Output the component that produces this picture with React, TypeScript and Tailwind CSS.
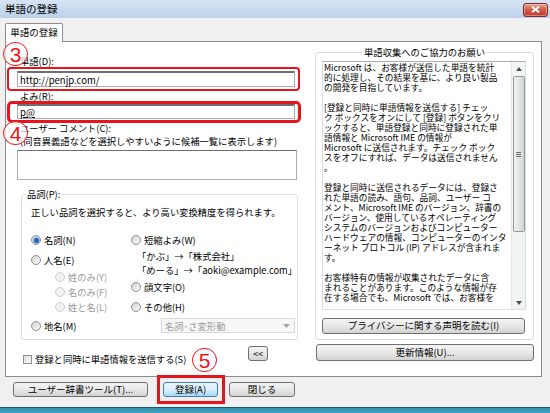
import React from 'react';

function Radio({ checked, disabled }: { checked?: boolean; disabled?: boolean }) {
  return (
    <span
      className={`flex h-[10px] w-[10px] shrink-0 items-center justify-center rounded-full border ${
        disabled
          ? 'border-[#cfcfcf] bg-[#f2f2f2]'
          : 'border-[#8e8f8f] bg-linear-to-br from-[#d2d2d2] to-[#fbfbfb]'
      }`}
    >
      {checked && <span className="h-[5px] w-[5px] rounded-full bg-[#2a62b8] ring-1 ring-[#8fb8ea]" />}
    </span>
  );
}

function Btn({
  children,
  className = '',
  primary,
}: {
  children: React.ReactNode;
  className?: string;
  primary?: boolean;
}) {
  return (
    <div
      className={`flex items-center justify-center rounded-[3px] border text-[9.5px] leading-none text-black ${
        primary
          ? 'border-[#3c7fb1] bg-linear-to-b from-[#eaf6fd] via-[#d9f0fc] to-[#a7d9f5]'
          : 'border-[#707070] bg-linear-to-b from-[#f4f4f4] via-[#e8e8e8] to-[#d2d2d2]'
      } ${className}`}
    >
      {children}
    </div>
  );
}

function Mark({ n, className }: { n: string; className: string }) {
  return (
    <div
      className={`absolute flex h-[24px] w-[25px] items-center justify-center rounded-full border-[1.5px] border-[#e8141c] bg-white/70 font-['Liberation_Sans',sans-serif] text-[21px] leading-none text-[#e8141c] ${className}`}
    >
      {n}
    </div>
  );
}

const INFO = [
  'Microsoft は、お客様が送信した単語を統計',
  '的に処理し、その結果を基に、より良い製品',
  'の開発を目指しています。',
  '',
  '[登録と同時に単語情報を送信する] チェッ',
  'ク ボックスをオンにして [登録] ボタンをクリ',
  'ックすると、単語登録と同時に登録された単',
  '語情報と Microsoft IME の情報が',
  'Microsoft に送信されます。チェック ボック',
  'スをオフにすれば、データは送信されません',
  '。',
  '',
  '登録と同時に送信されるデータには、登録さ',
  'れた単語の読み、語句、品詞、ユーザー コ',
  'メント、Microsoft IME のバージョン、辞書の',
  'バージョン、使用しているオペレーティング',
  'システムのバージョンおよびコンピューター',
  'ハードウェアの情報、コンピューターのインタ',
  'ーネット プロトコル (IP) アドレスが含まれま',
  'す。',
  '',
  'お客様特有の情報が収集されたデータに含',
  'まれることがあります。このような情報が存',
  '在する場合でも、Microsoft では、お客様を',
];

export default function App() {
  return (
    <div className="relative flex h-[413px] w-[550px] flex-col overflow-hidden bg-[#f0f0f0] font-['Noto_Sans_CJK_JP','Noto_Sans',sans-serif] text-black">
      {/* title bar */}
      <div className="flex h-[18px] shrink-0 items-center justify-between bg-linear-to-b from-[#d6e4f4] to-[#bcd1ea] pl-[5px] pr-[2px]">
        <span className="text-[10.5px] leading-none">単語の登録</span>
        <div className="mt-[1px] flex h-[14px] w-[25px] items-center justify-center rounded-[3px] border border-[#7a2a22] bg-linear-to-b from-[#e8a297] via-[#d0584a] to-[#c0392b] shadow-[inset_0_0_0_1px_rgba(255,255,255,0.35)]">
          <svg width="9" height="7" viewBox="0 0 9 7">
            <path d="M1 0.8 L8 6.2 M8 0.8 L1 6.2" stroke="#fff" strokeWidth="2" />
          </svg>
        </div>
      </div>

      {/* tab */}
      <div className="relative z-10 mt-[5px] -mb-px ml-[5px] flex h-[19px] w-[58px] items-center justify-center rounded-t-[2px] border border-b-0 border-[#898c95] bg-white text-[9.5px] leading-none">
        単語の登録
      </div>

      {/* panel */}
      <div className="ml-[5px] flex h-[336px] w-[537px] border border-[#898c95] bg-white">
        {/* left column */}
        <div className="flex w-[297px] flex-col pl-[1px] text-[9.3px] leading-[10px]">
          <div className="mt-[14px] pl-[13px] leading-[11px]">単語(D):</div>
          <div className="h-[24px] w-[293px] rounded-[4px] border-2 border-[#e8141c] pl-[8px] pt-[2px]">
            <div className="flex h-[16px] w-[278px] items-center border border-[#abadb3] border-t-[#6f6f6f] border-t-2 pl-[2px] text-[9.5px]">
              http://penjp.com/
            </div>
          </div>
          <div className="h-[10px] pl-[13px]">よみ(R):</div>
          <div className="h-[22px] w-[294px] rounded-[5px] border-[3px] border-[#e8141c] pl-[7px]">
            <div className="flex h-[15px] w-[278px] items-center border border-[#abadb3] border-t-[#6f6f6f] border-t-2 pl-[2px] text-[9.5px]">
              <span className="underline">p@</span>
            </div>
          </div>
          <div className="pl-[13px]">ユーザー コメント(C):</div>
          <div className="mt-[3px] pl-[13px] whitespace-nowrap">(同音異義語などを選択しやすいように候補一覧に表示します)</div>
          <div className="ml-[10px] mt-[4px] h-[30px] w-[280px] border border-[#abadb3] border-t-[#6f6f6f]" />

          {/* group box 品詞 */}
          <div className="relative ml-[14px] mt-[14px] h-[146px] w-[277px] rounded-[3px] border border-[#d5dfe5]">
            <div className="absolute -top-[6px] left-[4px] bg-white px-[1px]">品詞(P):</div>
            <div className="ml-[9px] mt-[12px] whitespace-nowrap">正しい品詞を選択すると、より高い変換精度を得られます。</div>
            <div className="mt-[18px] flex">
              <div className="ml-[9px] flex w-[103px] flex-col">
                <div className="flex items-center gap-[3px]">
                  <Radio checked />
                  <span>名詞(N)</span>
                </div>
                <div className="mt-[10px] flex items-center gap-[3px]">
                  <Radio />
                  <span>人名(E)</span>
                </div>
                <div className="ml-[24px] mt-[7px] flex flex-col gap-[5px] text-[#9a9a9a]">
                  <div className="flex items-center gap-[3px]">
                    <Radio disabled />
                    <span>姓のみ(Y)</span>
                  </div>
                  <div className="flex items-center gap-[3px]">
                    <Radio disabled />
                    <span>名のみ(F)</span>
                  </div>
                  <div className="flex items-center gap-[3px]">
                    <Radio disabled />
                    <span>姓と名(L)</span>
                  </div>
                </div>
              </div>
              <div className="flex flex-col">
                <div className="flex items-center gap-[3px]">
                  <Radio />
                  <span>短縮よみ(W)</span>
                </div>
                <div className="ml-[6px] mt-[6px] whitespace-nowrap">「かぶ」→「株式会社」</div>
                <div className="ml-[6px] mt-[4px] whitespace-nowrap">「めーる」→「aoki@example.com」</div>
                <div className="mt-[7px] flex items-center gap-[3px]">
                  <Radio />
                  <span>顔文字(O)</span>
                </div>
                <div className="mt-[10px] flex items-center gap-[3px]">
                  <Radio />
                  <span>その他(H)</span>
                </div>
              </div>
            </div>
            <div className="mt-[6px] flex items-center">
              <div className="ml-[9px] flex w-[130px] items-center gap-[3px]">
                <Radio />
                <span>地名(M)</span>
              </div>
              <div className="flex h-[15px] w-[134px] items-center justify-between border border-[#d9d9d9] bg-[#f7f7f7] pl-[3px] pr-[4px] text-[#9a9a9a]">
                <span>名詞･さ変形動</span>
                <svg width="7" height="4" viewBox="0 0 7 4">
                  <path d="M0 0 L7 0 L3.5 4 Z" fill="#a8a8a8" />
                </svg>
              </div>
            </div>
          </div>

          <div className="mt-[6px] flex items-start">
            <div className="ml-[16px] mt-[8px] flex w-[225px] items-center gap-[3px]">
              <span className="h-[9px] w-[9px] border border-[#8e8f8f] bg-linear-to-br from-[#dcdcdc] to-[#fafafa]" />
              <span>登録と同時に単語情報を送信する(S)</span>
            </div>
            <Btn className="h-[15px] w-[20px] !text-[9px]">&lt;&lt;</Btn>
          </div>
        </div>

        {/* right column */}
        <div className="ml-[12px] flex flex-col">
          <div className="relative mt-[10px] h-[288px] w-[219px] rounded-[3px] border border-[#d5dfe5]">
            <div className="absolute -top-[6px] left-0 right-0 flex justify-center">
              <span className="bg-white px-[2px] text-[9.3px] leading-[10px]">単語収集へのご協力のお願い</span>
            </div>
            <div className="ml-[6px] mt-[8px] flex h-[249px] w-[204px] border border-[#d5dfe5] border-t-[#abadb3]">
              <div className="flex-1 overflow-hidden pl-[1px] pt-[1px] text-[8.7px] leading-[10px]">
                {INFO.map((l, i) => (
                  <div key={i} className="h-[10px] whitespace-nowrap">
                    {l}
                  </div>
                ))}
              </div>
              <div className="flex w-[14px] flex-col items-center border-l border-[#e8e8e8] bg-[#f3f3f3]">
                <div className="flex h-[13px] items-center justify-center">
                  <svg width="6" height="4" viewBox="0 0 6 4">
                    <path d="M0 4 L6 4 L3 0 Z" fill="#4d4d4d" />
                  </svg>
                </div>
                <div className="mt-[1px] flex h-[156px] w-[12px] items-center justify-center rounded-[2px] border border-[#979797] bg-linear-to-r from-[#f2f2f2] via-[#e4e4e4] to-[#d4d4d4]">
                  <div className="flex flex-col gap-[1px]">
                    <span className="h-px w-[5px] bg-[#6a6a6a]" />
                    <span className="h-px w-[5px] bg-[#6a6a6a]" />
                    <span className="h-px w-[5px] bg-[#6a6a6a]" />
                  </div>
                </div>
                <div className="flex-1" />
                <div className="flex h-[13px] items-center justify-center">
                  <svg width="6" height="4" viewBox="0 0 6 4">
                    <path d="M0 0 L6 0 L3 4 Z" fill="#4d4d4d" />
                  </svg>
                </div>
              </div>
            </div>
            <Btn className="ml-[6px] mt-[8px] h-[16px] w-[203px]">プライバシーに関する声明を読む(I)</Btn>
          </div>
          <Btn className="ml-[1px] mt-[4px] h-[17px] w-[218px]">更新情報(U)...</Btn>
        </div>
      </div>

      {/* bottom buttons */}
      <div className="mt-[5px] flex h-[15px] items-start">
        <Btn className="ml-[13px] h-[15px] w-[135px]">ユーザー辞書ツール(T)...</Btn>
        <Btn primary className="ml-[15px] h-[15px] w-[55px]">登録(A)</Btn>
        <Btn className="ml-[11px] h-[15px] w-[66px]">閉じる</Btn>
      </div>
      <div className="mt-auto h-[6px] border-t border-[#1a5a70] bg-linear-to-b from-[#2f8fae] to-[#4aa5c2]" />

      {/* annotations */}
      <Mark n="3" className="left-[3px] top-[42px]" />
      <Mark n="4" className="left-[3px] top-[121px]" />
      <Mark n="5" className="left-[192px] top-[348px]" />
      <div className="absolute left-[157px] top-[375px] h-[29px] w-[68px] border-[3px] border-[#e8141c]" />
    </div>
  );
}
